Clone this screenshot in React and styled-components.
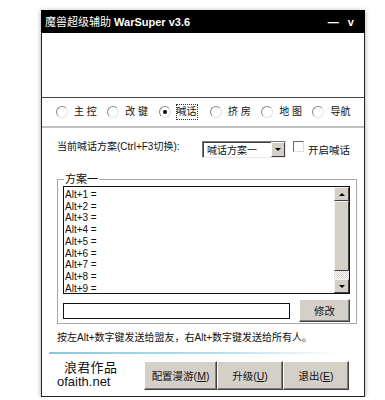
import React from 'react';
import styled, { createGlobalStyle } from 'styled-components';

const GlobalStyle = createGlobalStyle`
  body {
    margin: 0;
    background: #fff;
    font-family: "Liberation Sans", "Noto Sans CJK SC", sans-serif;
    line-height: 12px;
  }
`;

const Page = styled.div`
  padding: 10px 0 0 41px;
`;

const Window = styled.div`
  width: 322px;
  border: 1px solid #222;
  border-top: none;
  background: #fff;
  box-shadow: 0 1px 5px rgba(0, 0, 0, 0.35);
  display: flex;
  flex-direction: column;
`;

const TitleBar = styled.div`
  height: 23px;
  margin: 0 -1px;
  background: #000;
  color: #fff;
  display: flex;
  align-items: center;
  justify-content: space-between;
  padding: 0 8px 0 4px;
  font-size: 11px;

  b { font-weight: bold; }
  .ctl { font-weight: bold; letter-spacing: 3px; }
`;

const Banner = styled.div`
  height: 64px;
  border-bottom: 1px solid #444;
`;

const TabRow = styled.div`
  height: 28px;
  display: flex;
  align-items: center;
  padding-left: 14px;
  border-bottom: 2px solid #c0c0c0;
  font-size: 10px;
  color: #111;
`;

const TabItem = styled.label`
  display: flex;
  align-items: center;
  width: 51.3px;
  span.txt {
    margin-left: 6px;
    padding: 1px 0;
    outline: ${(p) => (p.focus ? '1px dotted #333' : 'none')};
    white-space: nowrap;
  }
`;

const Radio = styled.span`
  width: 10px;
  height: 10px;
  border-radius: 50%;
  border: 1px solid;
  border-color: #8a8a8a #e2e2e2 #e2e2e2 #8a8a8a;
  background: #fff;
  display: flex;
  align-items: center;
  justify-content: center;
  &::after {
    content: '';
    width: 4px;
    height: 4px;
    border-radius: 50%;
    background: ${(p) => (p.checked ? '#000' : 'transparent')};
  }
`;

const Content = styled.div`
  padding: 13px 7px 0 15px;
  font-size: 10px;
  color: #111;
`;

const SchemeRow = styled.div`
  display: flex;
  align-items: flex-start;
  height: 17px;
`;

const Label = styled.span`
  margin-top: 0;
  width: 145px;
  white-space: nowrap;
`;

const Combo = styled.div`
  width: 78px;
  height: 15px;
  border: 1px solid;
  border-color: #7a7a7a #e8e8e8 #e8e8e8 #7a7a7a;
  box-shadow: inset 1px 1px 0 #404040;
  display: flex;
  align-items: center;
  padding-left: 4px;
  box-sizing: content-box;
  span { flex: 1; margin-top: 2px; }
`;

const DropBtn = styled.div`
  width: 12px;
  height: 13px;
  background: #d4d0c8;
  border: 1px solid;
  border-color: #fff #404040 #404040 #fff;
  display: flex;
  align-items: center;
  justify-content: center;
  &::after {
    content: '';
    border-left: 3px solid transparent;
    border-right: 3px solid transparent;
    border-top: 3px solid #000;
  }
`;

const Check = styled.label`
  display: flex;
  align-items: flex-start;
  margin-left: 7px;
  gap: 4px;
  span.box {
    width: 9px;
    height: 9px;
    border: 1px solid;
    border-color: #666 #ddd #ddd #666;
    background: #fff;
  }
  span.t { margin-top: 3px; font-size: 10.5px; }
`;

const Group = styled.fieldset`
  margin: 16px 0 0 0;
  padding: 0 6px 1px 5px;
  border: 1px solid #a8a8a8;
  border-radius: 0;
  legend {
    padding: 0 1px;
    margin-left: 1px;
    font-size: 11px;
    line-height: 10px;
  }
`;

const ListBox = styled.div`
  margin-top: 2px;
  height: 106px;
  border: 1px solid #111;
  display: flex;
`;

const Items = styled.div`
  flex: 1;
  padding: 2px 0 0 1px;
  font-size: 10px;
  line-height: 11.7px;
  overflow: hidden;
`;

const ScrollBar = styled.div`
  width: 15px;
  display: flex;
  flex-direction: column;
`;

const ScrollBtn = styled.div`
  height: 14px;
  background: #d4d0c8;
  border: 1px solid;
  border-color: #f4f4f4 #404040 #404040 #f4f4f4;
  display: flex;
  align-items: center;
  justify-content: center;
  box-sizing: border-box;
  &::after {
    content: '';
    border-left: 3px solid transparent;
    border-right: 3px solid transparent;
    ${(p) => (p.up ? 'border-bottom: 3px solid #000;' : 'border-top: 3px solid #000;')}
  }
`;

const Thumb = styled.div`
  height: 70px;
  background: #d4d0c8;
  border: 1px solid;
  border-color: #f4f4f4 #404040 #404040 #f4f4f4;
  box-sizing: border-box;
`;

const Track = styled.div`
  flex: 1;
  background-image: repeating-conic-gradient(#d4d0c8 0 25%, #fff 0 50%);
  background-size: 2px 2px;
`;

const EditRow = styled.div`
  display: flex;
  align-items: center;
  justify-content: space-between;
  margin: 5px 0 0;
`;

const TextInput = styled.div`
  width: 225px;
  height: 14px;
  border: 1px solid #111;
`;

const Button = styled.div`
  width: ${(p) => p.w}px;
  height: ${(p) => p.h}px;
  box-sizing: border-box;
  background: #d4d0c8;
  border: 1px solid;
  border-color: #fff #404040 #404040 #fff;
  box-shadow: inset -1px -1px 0 #808080;
  display: flex;
  align-items: center;
  justify-content: center;
  font-size: 10.5px;
  color: #111;
  u { text-decoration: underline; }
`;

const Hint = styled.div`
  margin-top: 8px;
  font-size: 10px;
  white-space: nowrap;
`;

const GradientLine = styled.div`
  margin: 8px 0 0 7px;
  width: 292px;
  height: 2px;
  background: linear-gradient(90deg, #86c9e0, #b6e0ee 60%, #ffffff);
`;

const Footer = styled.div`
  display: flex;
  align-items: flex-start;
  padding: 7px 0 6px 15px;
`;

const Credit = styled.div`
  width: 87px;
  font-size: 13px;
  line-height: 14px;
  color: #111;
  .name { padding-left: 7px; letter-spacing: 0.3px; }
  .site { margin-top: 0; }
`;

const ButtonGroup = styled.div`
  display: flex;
`;

const tabs = ['主 控', '改 键', '喊话', '挤 房', '地 图', '导航'];

export default function App() {
  return (
    <Page>
      <GlobalStyle />
      <Window>
        <TitleBar>
          <span>魔兽超级辅助 <b>WarSuper v3.6</b></span>
          <span className="ctl">— v</span>
        </TitleBar>
        <Banner />
        <TabRow>
          {tabs.map((t, i) => (
            <TabItem key={t} focus={i === 2}>
              <Radio checked={i === 2} />
              <span className="txt">{t}</span>
            </TabItem>
          ))}
        </TabRow>
        <Content>
          <SchemeRow>
            <Label>当前喊话方案(Ctrl+F3切换):</Label>
            <Combo>
              <span>喊话方案一</span>
              <DropBtn />
            </Combo>
            <Check>
              <span className="box" />
              <span className="t">开启喊话</span>
            </Check>
          </SchemeRow>
          <Group>
            <legend>方案一</legend>
            <ListBox>
              <Items>
                {[1, 2, 3, 4, 5, 6, 7, 8, 9].map((n) => (
                  <div key={n}>Alt+{n} =</div>
                ))}
              </Items>
              <ScrollBar>
                <ScrollBtn up />
                <Thumb />
                <Track />
                <ScrollBtn />
              </ScrollBar>
            </ListBox>
            <EditRow>
              <TextInput />
              <Button w={51} h={23}>修改</Button>
            </EditRow>
          </Group>
          <Hint>按左Alt+数字键发送给盟友，右Alt+数字键发送给所有人。</Hint>
        </Content>
        <GradientLine />
        <Footer>
          <Credit>
            <div className="name">浪君作品</div>
            <div className="site">ofaith.net</div>
          </Credit>
          <ButtonGroup>
            <Button w={73} h={29}>配置漫游(<u>M</u>)</Button>
            <Button w={66} h={29}>升级(<u>U</u>)</Button>
            <Button w={66} h={29}>退出(<u>E</u>)</Button>
          </ButtonGroup>
        </Footer>
      </Window>
    </Page>
  );
}
